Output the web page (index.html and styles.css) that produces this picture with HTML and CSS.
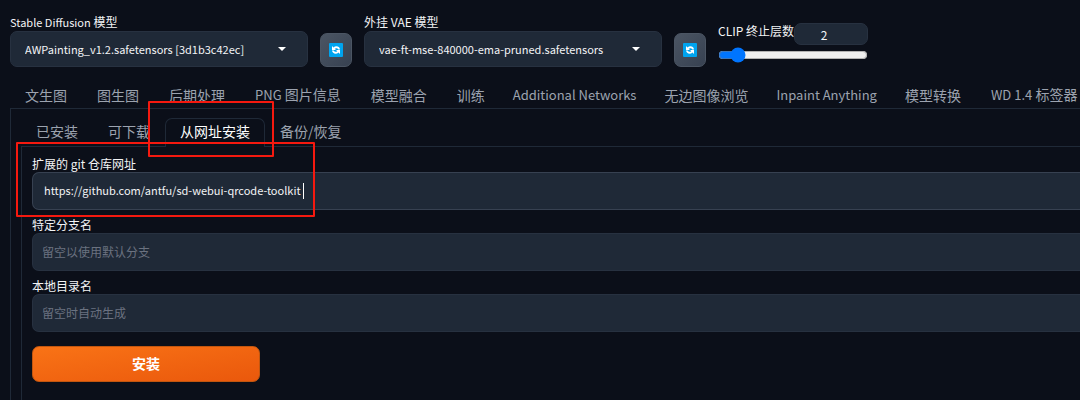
FILE: index.html
```html
<!DOCTYPE html>
<html lang="zh-CN">
<head>
    <meta charset="utf-8">
    <meta name="viewport" content="width=device-width, initial-scale=1">
    <title>Stable Diffusion</title>
    <link rel="stylesheet" href="styles.css">
</head>
<body>

<svg class="sprite" aria-hidden="true">
    <symbol id="refresh" viewBox="0 0 14 14">
        <rect width="14" height="14" rx="1" fill="#00a4ef"/>
        <path d="M3 3v4h4L5.700 5.700C6.800 4.800 8.700 5 9.300 6.500H11C10.700 3.300 6.800 2.200 4.500 4.500Z" fill="#fff"/>
        <path d="M11 11V7H7l1.300 1.300C7.200 9.200 5.300 9 4.700 7.500H3c.3 3.200 4.200 4.300 6.500 2Z" fill="#fff"/>
    </symbol>
</svg>

<div class="quicksettings">
    <div class="setting">
        <label for="checkpoint"><span class="en">Stable Diffusion</span> 模型</label>
        <div class="dropdown">
            <select id="checkpoint">
                <option>AWPainting_v1.2.safetensors [3d1b3c42ec]</option>
            </select>
        </div>
    </div>
    <button class="tool" type="button" aria-label="刷新模型"><svg><use href="#refresh"/></svg></button>
    <div class="setting">
        <label for="vae">外挂 VAE 模型</label>
        <div class="dropdown">
            <select id="vae">
                <option>vae-ft-mse-840000-ema-pruned.safetensors</option>
            </select>
        </div>
    </div>
    <button class="tool" type="button" aria-label="刷新 VAE"><svg><use href="#refresh"/></svg></button>
    <div class="clip">
        <div class="clip-head">
            <label for="clip-skip">CLIP 终止层数</label>
            <input type="text" id="clip-number" value="2" aria-label="CLIP 终止层数">
        </div>
        <input type="range" id="clip-skip" min="1" max="12" value="2">
    </div>
</div>

<main>
    <nav class="tabs">
        <button type="button">文生图</button>
        <button type="button">图生图</button>
        <button type="button">后期处理</button>
        <button type="button"><span class="en">PNG</span> 图片信息</button>
        <button type="button">模型融合</button>
        <button type="button">训练</button>
        <button type="button" class="latin">Additional Networks</button>
        <button type="button">无边图像浏览</button>
        <button type="button" class="latin">Inpaint Anything</button>
        <button type="button">模型转换</button>
        <button type="button"><span class="en">WD 1.4</span> 标签器</button>
    </nav>

    <div class="panel">
        <nav class="tabs sub-tabs">
            <button type="button">已安装</button>
            <button type="button">可下载</button>
            <button type="button" class="selected">从网址安装<span class="mark mark-tab"></span></button>
            <button type="button">备份/恢复</button>
        </nav>

        <form class="panel install">
            <div class="field">
                <label for="git-url">扩展的 git 仓库网址</label>
                <input type="text" id="git-url" class="focused" value="https://github.com/antfu/sd-webui-qrcode-toolkit">
                <span class="caret"></span>
                <span class="mark mark-url"></span>
            </div>
            <div class="field">
                <label for="branch">特定分支名</label>
                <input type="text" id="branch" placeholder="留空以使用默认分支">
            </div>
            <div class="field">
                <label for="dirname">本地目录名</label>
                <input type="text" id="dirname" placeholder="留空时自动生成">
            </div>
            <button type="button" class="primary">安装</button>
        </form>
    </div>
</main>

</body>
</html>
```

FILE: styles.css
```css
* {
    box-sizing: border-box;
}

body {
    margin: 0;
    padding: 14px 0 0 10px;
    min-height: 100vh;
    display: flex;
    flex-direction: column;
    overflow-x: hidden;
    background: #0b0f19;
    color: #f3f4f6;
    font-family: "Noto Sans CJK SC", "Noto Sans", sans-serif;
    font-size: 12px;
    line-height: 16px;
}

button, input, select {
    font: inherit;
    color: inherit;
    margin: 0;
}

.sprite {
    position: absolute;
    width: 0;
    height: 0;
}

/* top bar */
.quicksettings {
    display: flex;
    align-items: flex-end;
    gap: 12px;
}

.setting {
    width: 298px;
}

.setting label {
    display: block;
}

.setting .en {
    font-size: 11px;
}

.dropdown {
    position: relative;
    margin-top: 1px;
}

.dropdown::after {
    content: "";
    position: absolute;
    right: 22px;
    top: 16px;
    border: 4px solid transparent;
    border-top-color: #fff;
    border-bottom: 0;
}

.dropdown select {
    appearance: none;
    display: block;
    width: 100%;
    height: 36px;
    padding: 0 40px 0 14px;
    background: #1f2937;
    border: 1px solid #273140;
    border-radius: 7px;
    font-size: 11px;
}

.tool {
    width: 32px;
    height: 34px;
    padding: 0;
    display: flex;
    align-items: center;
    justify-content: center;
    background: linear-gradient(to bottom right, #4b5563, #374151);
    border: 1px solid #4b5563;
    border-radius: 7px;
}

.tool svg {
    width: 14px;
    height: 14px;
}

.clip {
    width: 150px;
    padding-bottom: 4px;
}

.clip-head {
    display: flex;
    justify-content: space-between;
    white-space: nowrap;
}

#clip-number {
    width: 74px;
    height: 22px;
    padding: 0 14px 0 0;
    text-align: center;
    background: #1f2937;
    border: 1px solid #273140;
    border-radius: 7px;
}

#clip-skip {
    display: block;
    width: 100%;
    height: 16px;
    margin-top: 2px;
    accent-color: #0075ff;
}

/* tabs */
main {
    flex: 1;
    display: flex;
    flex-direction: column;
    margin-top: 16px;
}

.tabs {
    display: flex;
    height: 26px;
    margin-bottom: -1px;
    white-space: nowrap;
}

.tabs button {
    flex: none;
    padding: 0 14px 4px;
    background: none;
    border: 1px solid transparent;
    border-bottom: 0;
    border-radius: 7px 7px 0 0;
    color: #9ca3af;
    font-size: 14px;
    line-height: 20px;
}

.tabs .latin {
    padding: 0 12px 4px;
    font-size: 13px;
}

.tabs .en {
    font-size: 13px;
}

.sub-tabs {
    height: 29px;
}

.tabs .selected {
    position: relative;
    background: #0b0f19;
    border-color: #1f2937;
    color: #fff;
}

.panel {
    flex: 1;
    display: flex;
    flex-direction: column;
    padding: 9px 0 0 10px;
    border: 1px solid #1f2937;
    border-width: 1px 0 0 1px;
}

/* install form */
.install {
    align-items: stretch;
    gap: 7px;
}

.field {
    position: relative;
}

.field label {
    display: block;
}

.field input {
    display: block;
    width: 100%;
    height: 38px;
    padding: 0 9px 2px;
    background: #1f2937;
    border: 1px solid #273140;
    border-right: 0;
    border-radius: 7px 0 0 7px;
    outline: none;
}

.field input::placeholder {
    color: #6b7280;
    opacity: 1;
}

.field .focused {
    padding-left: 11px;
    border-color: #374151;
    font-size: 11px;
}

.caret {
    position: absolute;
    left: 271px;
    bottom: 11px;
    width: 1px;
    height: 16px;
    background: #fff;
}

.primary {
    width: 228px;
    height: 36px;
    margin-top: 7px;
    padding: 0 0 2px;
    background: linear-gradient(to bottom right, #f97316, #ea580c);
    border: 1px solid #c2560f;
    border-radius: 7px;
    color: #fff;
    font-size: 14px;
    font-weight: 700;
}

/* red highlight frames */
.mark {
    position: absolute;
    z-index: 1;
    border: 2px solid #f5190f;
    border-radius: 1px;
    pointer-events: none;
}

.mark-tab {
    inset: -18px -10px -10px -18px;
}

.mark-url {
    top: -14px;
    left: -16px;
    width: 299px;
    height: 75px;
}
```
